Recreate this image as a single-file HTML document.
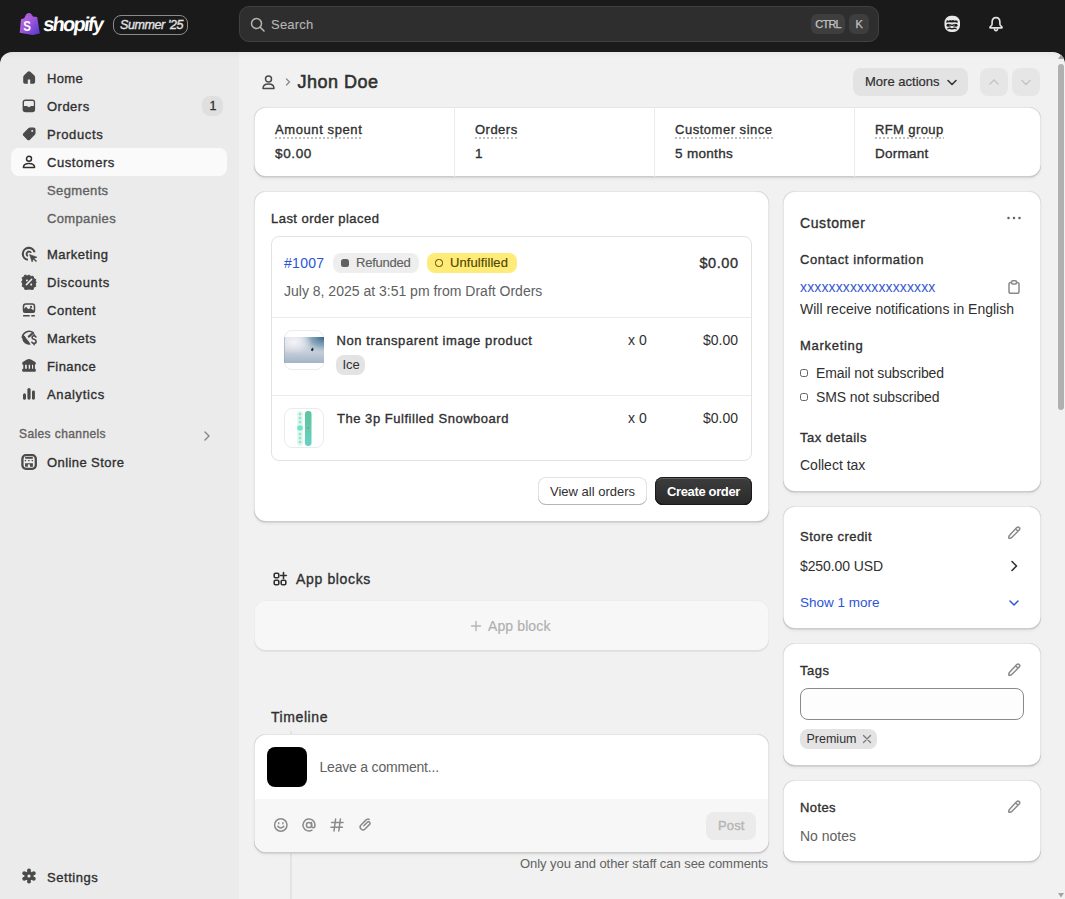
<!DOCTYPE html>
<html><head><meta charset="utf-8">
<style>
*{box-sizing:border-box;margin:0;padding:0}
html,body{width:1065px;height:899px;overflow:hidden;background:#1a1a1a;font-family:"Liberation Sans",sans-serif;color:#303030}
.abs{position:absolute}
.tx{position:absolute;white-space:nowrap;line-height:1}
</style></head><body>
<div class="abs" style="left:0px;top:0px;width:1065px;height:52px;background:#1a1a1a"></div>
<div class="abs" style="left:0px;top:52px;width:239px;height:847px;background:#ebebeb;border-top-left-radius:12px"></div>
<div class="abs" style="left:239px;top:52px;width:826px;height:847px;background:#f1f1f1;border-top-right-radius:12px"></div>
<div class="abs" style="left:0px;top:52px;width:1065px;height:6px;background:linear-gradient(rgba(0,0,0,.035),rgba(0,0,0,0));border-radius:12px 12px 0 0"></div>
<svg class="abs" style="left:19px;top:12px" width="22" height="24" viewBox="0 0 22 24"><defs><linearGradient id="bg" x1="0" y1="0" x2="1" y2="1"><stop offset="0" stop-color="#cc6ee0"/><stop offset=".5" stop-color="#9a55dc"/><stop offset="1" stop-color="#5038c8"/></linearGradient></defs><path d="M2 7.2 L5.3 6.2 Q6.8 1.2 9.8 0.9 Q12.6 1 13.8 4.4 L18.2 4.9 L20.8 21.6 L13.8 23 L0.7 20.8 Z" fill="url(#bg)"/><path d="M6.5 4.5 L7.5 3.2 M9.5 3.2 L10.5 2.2 M11.5 4 L12.3 3.2" stroke="#5a2a90" stroke-width=".8" opacity=".6"/><text transform="translate(4.2 19.3) scale(.74 1)" font-family="Liberation Sans" font-weight="700" font-size="15.5" fill="#fff">S</text></svg>
<div class="tx" style="left:42px;top:13.57px;font-size:20px;color:#fff;font-weight:700;letter-spacing:-1.732px;transform:skewX(-8deg);transform-origin:0 100%">shopify</div>
<div class="abs" style="left:113px;top:15px;width:75px;height:20px;border:1px solid #8a8a8a;border-radius:8px"></div>
<div class="tx" style="left:120px;top:19.02px;font-size:12.5px;color:#e3e3e3;font-weight:400;-webkit-text-stroke:0.35px #e3e3e3;letter-spacing:-0.400px;font-style:italic">Summer &#39;25</div>
<div class="abs" style="left:239px;top:6px;width:640px;height:36px;background:#2e2e2e;border:1px solid #414141;border-radius:10px"></div>
<svg class="abs" style="left:250px;top:17px" width="16" height="16" viewBox="0 0 16 16"><circle cx="6.5" cy="6.5" r="5" fill="none" stroke="#b5b5b5" stroke-width="1.5"/><path d="M10.2 10.2 L14 14" stroke="#b5b5b5" stroke-width="1.6" stroke-linecap="round"/></svg>
<div class="tx" style="left:271px;top:17.80px;font-size:13px;color:#b5b5b5;font-weight:400;-webkit-text-stroke:0.12px #b5b5b5;letter-spacing:0.216px;">Search</div>
<div class="abs" style="left:811px;top:14px;width:34px;height:20px;background:#3e3e3e;border-radius:6px"></div>
<div class="tx" style="left:815.2px;top:18.59px;font-size:11px;color:#c4c4c4;font-weight:400;-webkit-text-stroke:0.25px #c4c4c4;letter-spacing:-0.734px;">CTRL</div>
<div class="abs" style="left:849px;top:14px;width:20px;height:20px;background:#3e3e3e;border-radius:6px"></div>
<div class="tx" style="left:855.6px;top:18.59px;font-size:11px;color:#c4c4c4;font-weight:400;-webkit-text-stroke:0.25px #c4c4c4;letter-spacing:-0.344px;">K</div>
<svg class="abs" style="left:943px;top:15px" width="18" height="18" viewBox="0 0 18 18"><rect x="1.5" y="0.8" width="15.5" height="16.2" rx="6.5" fill="#e8e8e8"/><path d="M3.2 7.8 L3.6 5.6 L5 5.2 L5.6 6 L7 5 L8.6 5.6 L10.2 5 L11.8 5.8 L13.2 5.2 L14.6 6 L14.8 7.8 Q12 6.8 9 7.6 Q6 6.8 3.2 7.8Z" fill="#1a1a1a"/><circle cx="5" cy="10.2" r="1.5" fill="#1a1a1a"/><circle cx="13" cy="10.2" r="1.5" fill="#1a1a1a"/><path d="M6.2 9.3 L11.8 11.3 M6.2 11.3 L11.8 9.3" stroke="#1a1a1a" stroke-width="1"/><path d="M3.8 14.4 Q4.5 12.2 7 12.5 Q8 12.6 8.3 13 H9.7 Q10 12.6 11 12.5 Q13.5 12.2 14.2 14.4 Q12 13.8 9 14.4 Q6 13.8 3.8 14.4Z" fill="#1a1a1a"/></svg>
<svg class="abs" style="left:987px;top:15px" width="18" height="18" viewBox="0 0 18 18"><path d="M9 2.6 C6.2 2.6 5.1 4.8 5.1 7.3 V9 Q5.1 10.4 3.6 11.4 Q2.6 12.1 3.2 12.9 H14.8 Q15.4 12.1 14.4 11.4 Q12.9 10.4 12.9 9 V7.3 C12.9 4.8 11.8 2.6 9 2.6Z" fill="none" stroke="#e3e3e3" stroke-width="1.6" stroke-linejoin="round"/><path d="M7.4 13.4 Q7.5 15.7 9 15.7 Q10.5 15.7 10.6 13.4" fill="none" stroke="#e3e3e3" stroke-width="1.5"/></svg>
<div class="abs" style="left:11px;top:148px;width:216px;height:28px;background:#fafafa;border-radius:8px"></div>
<div class="tx" style="left:47px;top:72.00px;font-size:13px;color:#303030;font-weight:400;-webkit-text-stroke:0.35px #303030;letter-spacing:0.359px;">Home</div>
<div class="tx" style="left:47px;top:100.00px;font-size:13px;color:#303030;font-weight:400;-webkit-text-stroke:0.35px #303030;letter-spacing:0.484px;">Orders</div>
<div class="tx" style="left:47px;top:128.00px;font-size:13px;color:#303030;font-weight:400;-webkit-text-stroke:0.35px #303030;letter-spacing:0.629px;">Products</div>
<div class="tx" style="left:47px;top:156.00px;font-size:13px;color:#303030;font-weight:400;-webkit-text-stroke:0.35px #303030;letter-spacing:0.562px;">Customers</div>
<div class="tx" style="left:47px;top:248.00px;font-size:13px;color:#303030;font-weight:400;-webkit-text-stroke:0.35px #303030;letter-spacing:0.481px;">Marketing</div>
<div class="tx" style="left:47px;top:276.00px;font-size:13px;color:#303030;font-weight:400;-webkit-text-stroke:0.35px #303030;letter-spacing:0.641px;">Discounts</div>
<div class="tx" style="left:47px;top:304.00px;font-size:13px;color:#303030;font-weight:400;-webkit-text-stroke:0.35px #303030;letter-spacing:0.509px;">Content</div>
<div class="tx" style="left:47px;top:332.00px;font-size:13px;color:#303030;font-weight:400;-webkit-text-stroke:0.35px #303030;letter-spacing:0.415px;">Markets</div>
<div class="tx" style="left:47px;top:360.00px;font-size:13px;color:#303030;font-weight:400;-webkit-text-stroke:0.35px #303030;letter-spacing:0.411px;">Finance</div>
<div class="tx" style="left:47px;top:388.00px;font-size:13px;color:#303030;font-weight:400;-webkit-text-stroke:0.35px #303030;letter-spacing:0.642px;">Analytics</div>
<div class="tx" style="left:47px;top:456.00px;font-size:13px;color:#303030;font-weight:400;-webkit-text-stroke:0.35px #303030;letter-spacing:0.419px;">Online Store</div>
<div class="tx" style="left:47px;top:870.50px;font-size:13px;color:#303030;font-weight:400;-webkit-text-stroke:0.35px #303030;letter-spacing:0.539px;">Settings</div>
<div class="tx" style="left:47px;top:184.00px;font-size:13px;color:#616161;font-weight:400;-webkit-text-stroke:0.35px #616161;letter-spacing:0.369px;">Segments</div>
<div class="tx" style="left:47px;top:212.00px;font-size:13px;color:#616161;font-weight:400;-webkit-text-stroke:0.35px #616161;letter-spacing:0.359px;">Companies</div>
<div class="tx" style="left:19px;top:428.34px;font-size:12px;color:#616161;font-weight:400;-webkit-text-stroke:0.35px #616161;letter-spacing:0.401px;">Sales channels</div>
<svg class="abs" style="left:203px;top:430px" width="8" height="12" viewBox="0 0 8 12"><path d="M2 2 L6 6 L2 10" fill="none" stroke="#8a8a8a" stroke-width="1.5" stroke-linecap="round" stroke-linejoin="round"/></svg>
<div class="abs" style="left:202px;top:96px;width:21px;height:20px;background:#dfdfdf;border-radius:8px"></div>
<div class="tx" style="left:209.5px;top:99.72px;font-size:12.5px;color:#303030;font-weight:400;-webkit-text-stroke:0.3px #303030;letter-spacing:0.000px;">1</div>
<svg class="abs" style="left:21px;top:70px" width="16" height="16" viewBox="0 0 16 16"><path d="M8 1.2 Q7.2 1.2 6.4 2 L3.1 5.3 Q2.2 6.2 2.2 7.5 V12 Q2.2 13.7 3.9 13.7 H6.8 V9.6 H9.2 V13.7 H12.4 Q14.1 13.7 14.1 12 V7.5 Q14.1 6.2 13.2 5.3 L9.6 2 Q8.8 1.2 8 1.2Z" fill="#4a4a4a"/></svg>
<svg class="abs" style="left:21px;top:98px" width="16" height="16" viewBox="0 0 16 16"><path d="M4.6 1.6 H11.4 Q14.1 1.6 14.1 4.3 V11.6 Q14.1 14.3 11.4 14.3 H4.6 Q1.6 14.3 1.6 11.6 V4.3 Q1.6 1.6 4.6 1.6Z" fill="#4a4a4a"/><path d="M3 4.3 Q3 3 4.3 3 H11.5 Q12.8 3 12.8 4.3 V8 H10.2 L8 9.3 L5.8 8 H3Z" fill="#ebebeb"/></svg>
<svg class="abs" style="left:21px;top:126px" width="16" height="16" viewBox="0 0 16 16"><path d="M9 2.2 H12.6 Q13.9 2.2 13.9 3.5 V7.1 Q13.9 7.8 13.4 8.3 L8.5 13.2 Q7.6 14.1 6.7 13.2 L2.9 9.4 Q2 8.5 2.9 7.6 L7.8 2.7 Q8.3 2.2 9 2.2Z" fill="#4a4a4a" stroke="#4a4a4a" stroke-width="1.3" stroke-linejoin="round"/><rect x="10.3" y="4" width="1.8" height="1.8" rx=".5" fill="#ebebeb"/></svg>
<svg class="abs" style="left:21px;top:154px" width="16" height="16" viewBox="0 0 16 16"><circle cx="8" cy="4.8" r="2.5" fill="none" stroke="#303030" stroke-width="1.5"/><path d="M2.4 13.4 Q2.6 9.6 8 9.6 Q13.4 9.6 13.6 13.4 Z" fill="none" stroke="#303030" stroke-width="1.5" stroke-linejoin="round"/></svg>
<svg class="abs" style="left:21px;top:246px" width="16" height="16" viewBox="0 0 16 16"><path d="M13.6 6.3 A6 6 0 1 0 6.9 13.8" fill="none" stroke="#4a4a4a" stroke-width="2.1"/><path d="M10.1 6.8 A2.4 2.4 0 1 0 6.9 10.1" fill="none" stroke="#4a4a4a" stroke-width="1.9"/><path d="M8.6 8.6 L16 11.2 L13 12.4 L15.6 15 L14.9 15.7 L12.3 13.1 L11.1 16Z" fill="#4a4a4a" stroke="#4a4a4a" stroke-width=".6" stroke-linejoin="round"/></svg>
<svg class="abs" style="left:21px;top:274px" width="16" height="16" viewBox="0 0 16 16"><path d="M8 0.3 L10 1.9 L12.5 1.8 L13.2 4.2 L15.5 5.3 L14.7 7.8 L16 8 L14.7 10.2 L15.5 12.6 L13.2 13.7 L12.5 16.1 L10 16 L8 15.7 L6 16 L3.5 16.1 L2.8 13.7 L0.5 12.6 L1.3 10.2 L0 8 L1.3 5.7 L0.5 3.3 L2.8 2.2 L3.5 0.3 L6 1.5Z" fill="#4a4a4a" stroke="#4a4a4a" stroke-width="1" stroke-linejoin="round" transform="translate(8 8) scale(.92) translate(-8 -8)"/><path d="M5.4 10.6 L10.6 5.4" stroke="#ebebeb" stroke-width="1.5" stroke-linecap="round"/><rect x="5" y="5.4" width="1.8" height="1.8" rx=".5" fill="#ebebeb"/><rect x="9.3" y="9.6" width="1.8" height="1.8" rx=".5" fill="#ebebeb"/></svg>
<svg class="abs" style="left:21px;top:302px" width="16" height="16" viewBox="0 0 16 16"><rect x="2.5" y="2.1" width="11" height="8.2" rx="2.2" fill="#ebebeb" stroke="#4a4a4a" stroke-width="1.5"/><path d="M2.5 9 L2.5 7.5 L5 4.8 L7.3 7.3 L9.5 6 L13.5 9.2 L13.5 10.3 H2.5Z" fill="#4a4a4a"/><rect x="2.5" y="8.5" width="11" height="2" fill="#4a4a4a"/><circle cx="10.1" cy="4.9" r="1.1" fill="#4a4a4a"/><rect x="2" y="13" width="6.8" height="1.5" rx=".6" fill="#4a4a4a"/><rect x="10.2" y="13" width="3.7" height="1.5" rx=".6" fill="#4a4a4a"/></svg>
<svg class="abs" style="left:21px;top:330px" width="16" height="16" viewBox="0 0 16 16"><path d="M1.3 8 A6.8 6.8 0 0 1 12.4 2.9" fill="none" stroke="#4a4a4a" stroke-width="1.6"/><path d="M1.2 8 A6.8 6.8 0 0 0 9.6 14.6 L8.8 13 L7.2 10.8 L5.4 8.4 L3.7 6 L1.8 4.8 Z" fill="#4a4a4a"/><path d="M7.8 6.6 L11.9 3" stroke="#4a4a4a" stroke-width="2.2" stroke-linecap="round"/><path d="M14.9 6.9 Q14.4 5.7 13 5.7 Q11.1 5.7 11.1 7.4 Q11.1 8.9 13.1 9.3 Q15.1 9.7 15.1 11.6 Q15.1 13.4 13 13.4 Q11.4 13.4 10.9 12.2" fill="none" stroke="#4a4a4a" stroke-width="1.6" stroke-linecap="round"/><path d="M13.1 4.3 V5.7 M13.1 13.4 V14.8" stroke="#4a4a4a" stroke-width="1.5" stroke-linecap="round"/></svg>
<svg class="abs" style="left:21px;top:358px" width="16" height="16" viewBox="0 0 16 16"><path d="M8 0.9 Q9 0.9 10.5 1.8 L14.2 4 Q14.8 4.4 14.8 5.2 V5.8 Q14.8 6.7 13.9 6.7 H2.1 Q1.2 6.7 1.2 5.8 V5.2 Q1.2 4.4 1.8 4 L5.5 1.8 Q7 0.9 8 0.9Z" fill="#4a4a4a"/><rect x="2.3" y="6" width="1.8" height="5.5" fill="#4a4a4a"/><rect x="5.8" y="6" width="1.9" height="5.5" fill="#4a4a4a"/><rect x="9.1" y="6" width="1.9" height="5.5" fill="#4a4a4a"/><rect x="12.1" y="6" width="1.8" height="5.5" fill="#4a4a4a"/><path d="M2.1 10.7 H13.9 Q14.8 10.7 14.8 11.6 V12.8 Q14.8 13.7 13.9 13.7 H2.1 Q1.2 13.7 1.2 12.8 V11.6 Q1.2 10.7 2.1 10.7Z" fill="#4a4a4a"/></svg>
<svg class="abs" style="left:21px;top:386px" width="16" height="16" viewBox="0 0 16 16"><rect x="2" y="7.3" width="3" height="6.4" rx="1.5" fill="#4a4a4a"/><rect x="6.4" y="2" width="3.2" height="11.7" rx="1.6" fill="#4a4a4a"/><rect x="11" y="4.4" width="2.9" height="9.3" rx="1.45" fill="#4a4a4a"/></svg>
<svg class="abs" style="left:21px;top:454px" width="16" height="16" viewBox="0 0 16 16"><rect x="1.4" y="1.2" width="13.4" height="13.6" rx="3.5" fill="none" stroke="#4a4a4a" stroke-width="2.3"/><rect x="4.1" y="3.1" width="7.8" height="1.7" rx=".5" fill="#4a4a4a"/><path d="M3.4 6 H5.4 L4.4 7.8Z M6.9 6 H8.9 L7.9 7.8Z M10.3 6 H12.3 L11.3 7.8Z" fill="#4a4a4a"/><path d="M4.1 9.2 H11.9 V12.8 H9 V10.8 Q9 10.2 7.9 10.2 Q6.8 10.2 6.8 10.8 V12.8 H4.1Z" fill="#4a4a4a"/></svg>
<svg class="abs" style="left:21px;top:868px" width="16" height="16" viewBox="0 0 16 16"><circle cx="8" cy="8" r="4.7" fill="#4a4a4a"/><circle cx="8" cy="2.6" r="2" fill="#4a4a4a"/><circle cx="8" cy="13.4" r="2" fill="#4a4a4a"/><circle cx="3.3" cy="5.3" r="2" fill="#4a4a4a"/><circle cx="12.7" cy="5.3" r="2" fill="#4a4a4a"/><circle cx="3.3" cy="10.7" r="2" fill="#4a4a4a"/><circle cx="12.7" cy="10.7" r="2" fill="#4a4a4a"/><circle cx="8" cy="8" r="1.6" fill="#ebebeb"/></svg>
<svg class="abs" style="left:261px;top:74px" width="15" height="16" viewBox="0 0 15 16"><circle cx="7.5" cy="5" r="3" fill="none" stroke="#4a4a4a" stroke-width="1.5"/><path d="M2 14.5 Q2 10 7.5 10 Q13 10 13 14.5 Z" fill="none" stroke="#4a4a4a" stroke-width="1.5" stroke-linejoin="round"/></svg>
<svg class="abs" style="left:284px;top:77px" width="8" height="10" viewBox="0 0 8 10"><path d="M2.5 2 L5.5 5 L2.5 8" fill="none" stroke="#8a8a8a" stroke-width="1.3" stroke-linecap="round"/></svg>
<div class="tx" style="left:297.5px;top:72.76px;font-size:18px;color:#303030;font-weight:400;-webkit-text-stroke:0.55px #303030;letter-spacing:0.492px;">Jhon Doe</div>
<div class="abs" style="left:853px;top:68px;width:115px;height:28px;background:#e3e3e3;border-radius:8px"></div>
<div class="tx" style="left:865px;top:74.80px;font-size:13px;color:#303030;font-weight:400;-webkit-text-stroke:0.2px #303030;letter-spacing:0.007px;">More actions</div>
<svg class="abs" style="left:945px;top:77px" width="14" height="12" viewBox="0 0 14 12"><path d="M3 3.5 L7 7.5 L11 3.5" fill="none" stroke="#303030" stroke-width="1.5" stroke-linecap="round" stroke-linejoin="round"/></svg>
<div class="abs" style="left:980px;top:68px;width:28px;height:28px;background:#e6e6e6;border-radius:8px"></div>
<div class="abs" style="left:1012px;top:68px;width:28px;height:28px;background:#e6e6e6;border-radius:8px"></div>
<svg class="abs" style="left:986px;top:74px" width="16" height="16" viewBox="0 0 16 16"><path d="M4 10 L8 6 L12 10" fill="none" stroke="#c4c4c4" stroke-width="1.4" stroke-linecap="round"/></svg>
<svg class="abs" style="left:1018px;top:74px" width="16" height="16" viewBox="0 0 16 16"><path d="M4 6.5 L8 10.5 L12 6.5" fill="none" stroke="#c4c4c4" stroke-width="1.4" stroke-linecap="round"/></svg>
<div class="abs" style="left:254px;top:107px;width:787px;height:70px;background:#fff;border-radius:12px;box-shadow:inset 0 -1px 0 rgba(0,0,0,.2),inset 1px 0 0 rgba(0,0,0,.1),inset -1px 0 0 rgba(0,0,0,.1),inset 0 1px 0 rgba(204,204,204,.5),0 1px 0 rgba(26,26,26,.07),0 2px 3px rgba(26,26,26,.06);"></div>
<div class="abs" style="left:454px;top:107px;width:1px;height:70px;background:#ebebeb"></div>
<div class="abs" style="left:654px;top:107px;width:1px;height:70px;background:#ebebeb"></div>
<div class="abs" style="left:854px;top:107px;width:1px;height:70px;background:#ebebeb"></div>
<div class="tx" style="left:275px;top:123.00px;font-size:13px;color:#303030;font-weight:400;-webkit-text-stroke:0.35px #303030;letter-spacing:0.598px;">Amount spent</div>
<div class="abs" style="left:275px;top:137px;width:88px;height:2px;background-image:linear-gradient(90deg,#c0c0c0 50%,transparent 50%);background-size:4px 2px"></div>
<div class="tx" style="left:275px;top:147.37px;font-size:13.5px;color:#303030;font-weight:400;-webkit-text-stroke:0.35px #303030;letter-spacing:0.641px;">$0.00</div>
<div class="tx" style="left:475px;top:123.00px;font-size:13px;color:#303030;font-weight:400;-webkit-text-stroke:0.35px #303030;letter-spacing:0.484px;">Orders</div>
<div class="abs" style="left:475px;top:137px;width:43px;height:2px;background-image:linear-gradient(90deg,#c0c0c0 50%,transparent 50%);background-size:4px 2px"></div>
<div class="tx" style="left:475px;top:147.37px;font-size:13.5px;color:#303030;font-weight:400;-webkit-text-stroke:0.35px #303030;letter-spacing:0.000px;">1</div>
<div class="tx" style="left:675px;top:123.00px;font-size:13px;color:#303030;font-weight:400;-webkit-text-stroke:0.35px #303030;letter-spacing:0.517px;">Customer since</div>
<div class="abs" style="left:675px;top:137px;width:98px;height:2px;background-image:linear-gradient(90deg,#c0c0c0 50%,transparent 50%);background-size:4px 2px"></div>
<div class="tx" style="left:675px;top:147.37px;font-size:13.5px;color:#303030;font-weight:400;-webkit-text-stroke:0.35px #303030;letter-spacing:0.309px;">5 months</div>
<div class="tx" style="left:875px;top:123.00px;font-size:13px;color:#303030;font-weight:400;-webkit-text-stroke:0.35px #303030;letter-spacing:0.396px;">RFM group</div>
<div class="abs" style="left:875px;top:137px;width:69px;height:2px;background-image:linear-gradient(90deg,#c0c0c0 50%,transparent 50%);background-size:4px 2px"></div>
<div class="tx" style="left:875px;top:147.37px;font-size:13.5px;color:#303030;font-weight:400;-webkit-text-stroke:0.35px #303030;letter-spacing:0.248px;">Dormant</div>
<div class="abs" style="left:254px;top:191px;width:515px;height:331px;background:#fff;border-radius:12px;box-shadow:inset 0 -1px 0 rgba(0,0,0,.2),inset 1px 0 0 rgba(0,0,0,.1),inset -1px 0 0 rgba(0,0,0,.1),inset 0 1px 0 rgba(204,204,204,.5),0 1px 0 rgba(26,26,26,.07),0 2px 3px rgba(26,26,26,.06);"></div>
<div class="tx" style="left:271px;top:211.70px;font-size:13px;color:#303030;font-weight:400;-webkit-text-stroke:0.35px #303030;letter-spacing:0.466px;">Last order placed</div>
<div class="abs" style="left:271px;top:236px;width:481px;height:225px;border:1px solid #e3e3e3;border-radius:8px"></div>
<div class="abs" style="left:272px;top:317px;width:479px;height:1px;background:#ebebeb"></div>
<div class="abs" style="left:272px;top:395px;width:479px;height:1px;background:#ebebeb"></div>
<div class="tx" style="left:284px;top:256.15px;font-size:14px;color:#2a55d6;font-weight:400;letter-spacing:0.3px">#1007</div>
<div class="abs" style="left:333px;top:253px;width:86px;height:20px;background:#eeeeee;border-radius:8px"></div>
<div class="abs" style="left:341px;top:259px;width:8px;height:8px;background:#616161;border-radius:2.5px"></div>
<div class="tx" style="left:356px;top:256.00px;font-size:13px;color:#616161;font-weight:400;-webkit-text-stroke:0.15px #616161;letter-spacing:-0.236px;">Refunded</div>
<div class="abs" style="left:427px;top:253px;width:90px;height:20px;background:#ffeb78;border-radius:8px"></div>
<div class="abs" style="left:435px;top:259px;width:8px;height:8px;border:1.7px solid #4f4700;border-radius:3.5px"></div>
<div class="tx" style="left:450px;top:256.00px;font-size:13px;color:#4f4700;font-weight:400;-webkit-text-stroke:0.15px #4f4700;letter-spacing:0.082px;">Unfulfilled</div>
<div class="tx" style="right:326.5px;top:256.23px;font-size:14.5px;color:#303030;font-weight:400;-webkit-text-stroke:0.35px #303030;letter-spacing:0.541px;">$0.00</div>
<div class="tx" style="left:284px;top:284.15px;font-size:14px;color:#616161;font-weight:400;">July 8, 2025 at 3:51 pm from Draft Orders</div>
<div class="abs" style="left:284px;top:330px;width:40px;height:40px;border:1px solid #ebebeb;border-radius:8px;background:#fff"></div>
<svg class="abs" style="left:284px;top:337px" width="40" height="26" viewBox="0 0 40 26"><defs><linearGradient id="sky" x1="0" y1="0" x2="0" y2="1"><stop offset="0" stop-color="#dcdfe8"/><stop offset=".55" stop-color="#c9d0db"/><stop offset="1" stop-color="#a3b4c6"/></linearGradient><radialGradient id="tr" cx="1" cy="0" r=".7"><stop offset="0" stop-color="#2f6486"/><stop offset=".5" stop-color="#6c93ad" stop-opacity=".7"/><stop offset="1" stop-color="#c9d3de" stop-opacity="0"/></radialGradient><radialGradient id="wh" cx=".25" cy=".2" r=".45"><stop offset="0" stop-color="#f4f2f6"/><stop offset="1" stop-color="#f4f2f6" stop-opacity="0"/></radialGradient></defs><rect width="40" height="26" fill="url(#sky)"/><rect width="40" height="26" fill="url(#tr)"/><rect width="40" height="26" fill="url(#wh)"/><rect x="0" y="0" width="1" height="26" fill="#8fa6bd" opacity=".6"/><path d="M27.2 12 L29 10.6 L29.6 12.6 L28.6 14.2 L27 13.6Z" fill="#1f2a33"/></svg>
<div class="tx" style="left:336.5px;top:334.20px;font-size:13px;color:#303030;font-weight:400;-webkit-text-stroke:0.35px #303030;letter-spacing:0.579px;">Non transparent image product</div>
<div class="abs" style="left:336px;top:355px;width:29px;height:20px;background:#e3e3e3;border-radius:8px"></div>
<div class="tx" style="left:342.5px;top:358.00px;font-size:13px;color:#303030;font-weight:400;">Ice</div>
<div class="tx" style="left:628px;top:333.15px;font-size:14px;color:#303030;font-weight:400;">x 0</div>
<div class="tx" style="right:327px;top:333.15px;font-size:14px;color:#303030;font-weight:400;">$0.00</div>
<div class="abs" style="left:284px;top:408px;width:40px;height:40px;border:1px solid #ebebeb;border-radius:8px;background:#fff"></div>
<svg class="abs" style="left:294px;top:410px" width="20" height="36" viewBox="0 0 20 36"><defs><linearGradient id="sb" x1="0" y1="0" x2="0" y2="1"><stop offset="0" stop-color="#5ac49a"/><stop offset="1" stop-color="#66d2c4"/></linearGradient></defs><rect x="3" y="1" width="6" height="35" rx="3" fill="#e6f7f1"/><circle cx="6" cy="4" r="1.5" fill="#8ee8cc"/><circle cx="6" cy="8" r="1.5" fill="#8ee8cc"/><circle cx="6" cy="12" r="1.5" fill="#8ee8cc"/><circle cx="6" cy="18" r="2.8" fill="#6be8c8"/><circle cx="6" cy="24" r="1.5" fill="#8ee8cc"/><circle cx="6" cy="28" r="1.5" fill="#8ee8cc"/><circle cx="6" cy="32" r="1.5" fill="#8ee8cc"/><rect x="11" y="1" width="6.5" height="35" rx="3.2" fill="url(#sb)"/><circle cx="14.2" cy="18" r=".9" fill="#d9706a"/></svg>
<div class="tx" style="left:337px;top:412.30px;font-size:13px;color:#303030;font-weight:400;-webkit-text-stroke:0.35px #303030;letter-spacing:0.528px;">The 3p Fulfilled Snowboard</div>
<div class="tx" style="left:628px;top:411.45px;font-size:14px;color:#303030;font-weight:400;">x 0</div>
<div class="tx" style="right:327px;top:411.45px;font-size:14px;color:#303030;font-weight:400;">$0.00</div>
<div class="abs" style="left:538px;top:477px;width:109px;height:28px;background:#fff;border-radius:8px;box-shadow:inset 0 -1px 0 #b5b5b5,inset 0 0 0 1px #e3e3e3"></div>
<div class="tx" style="left:550px;top:484.50px;font-size:13px;color:#303030;font-weight:400;">View all orders</div>
<div class="abs" style="left:655px;top:477px;width:97px;height:28px;background:linear-gradient(#3d3d3d,#2a2a2a);border-radius:8px;box-shadow:inset 0 0 0 1px #1a1a1a,inset 0 2px 0 rgba(255,255,255,.18),inset 0 -1px 0 #000"></div>
<div class="tx" style="left:667px;top:484.50px;font-size:13px;color:#fff;font-weight:700;letter-spacing:-0.359px;">Create order</div>
<svg class="abs" style="left:272px;top:571px" width="16" height="16" viewBox="0 0 16 16"><rect x="2.2" y="2.2" width="4.6" height="4.6" rx="1.3" fill="none" stroke="#303030" stroke-width="1.6"/><rect x="2.2" y="9.2" width="4.6" height="4.6" rx="1.3" fill="none" stroke="#303030" stroke-width="1.6"/><rect x="9.2" y="9.2" width="4.6" height="4.6" rx="1.3" fill="none" stroke="#303030" stroke-width="1.6"/><path d="M11.5 1.6 V7.4 M8.6 4.5 H14.4" stroke="#303030" stroke-width="1.6" stroke-linecap="round"/></svg>
<div class="tx" style="left:296px;top:571.95px;font-size:14px;color:#303030;font-weight:400;-webkit-text-stroke:0.35px #303030;letter-spacing:0.652px;">App blocks</div>
<div class="abs" style="left:254px;top:600px;width:515px;height:51px;background:#f7f7f7;border-radius:12px;box-shadow:0 1px 0 rgba(26,26,26,.07),inset 0 -1px 0 rgba(0,0,0,.06),inset 0 0 0 1px rgba(0,0,0,.04)"></div>
<svg class="abs" style="left:470px;top:620px" width="12" height="12" viewBox="0 0 12 12"><path d="M6 1.5 V10.5 M1.5 6 H10.5" stroke="#b5b5b5" stroke-width="1.4" stroke-linecap="round"/></svg>
<div class="tx" style="left:488px;top:619.25px;font-size:14px;color:#b0b0b0;font-weight:400;-webkit-text-stroke:0.2px #b0b0b0;letter-spacing:0.113px;">App block</div>
<div class="tx" style="left:271px;top:709.85px;font-size:14px;color:#303030;font-weight:400;-webkit-text-stroke:0.35px #303030;letter-spacing:0.576px;">Timeline</div>
<div class="abs" style="left:290px;top:731px;width:2px;height:168px;background:#e3e3e3"></div>
<div class="abs" style="left:254px;top:734px;width:515px;height:119px;background:#fff;border-radius:12px;box-shadow:inset 0 -1px 0 rgba(0,0,0,.2),inset 1px 0 0 rgba(0,0,0,.1),inset -1px 0 0 rgba(0,0,0,.1),inset 0 1px 0 rgba(204,204,204,.5),0 1px 0 rgba(26,26,26,.07),0 2px 3px rgba(26,26,26,.06);overflow:hidden"></div>
<div class="abs" style="left:255px;top:799px;width:513px;height:53px;background:#f7f7f7;border-radius:0 0 11px 11px"></div>
<div class="abs" style="left:267px;top:747px;width:40px;height:40px;background:#000;border-radius:8px"></div>
<div class="tx" style="left:319.5px;top:760.45px;font-size:14px;color:#616161;font-weight:400;letter-spacing:-0.2px">Leave a comment...</div>
<svg class="abs" style="left:273px;top:817px" width="16" height="16" viewBox="0 0 16 16"><circle cx="7.8" cy="8" r="6.2" fill="none" stroke="#8a8a8a" stroke-width="1.5"/><rect x="5" y="5" width="1.4" height="2.4" rx=".7" fill="#8a8a8a"/><rect x="9.2" y="5" width="1.4" height="2.4" rx=".7" fill="#8a8a8a"/><path d="M4.8 9.2 Q7.8 12.6 10.8 9.2" fill="none" stroke="#8a8a8a" stroke-width="1.5" stroke-linecap="round"/></svg>
<svg class="abs" style="left:301px;top:817px" width="16" height="16" viewBox="0 0 16 16"><circle cx="8" cy="8" r="2.6" fill="none" stroke="#8a8a8a" stroke-width="1.5"/><path d="M10.6 5.6 V9 Q10.6 10.8 12.2 10.8 Q14 10.8 14 8 A6 6 0 1 0 11 13.2" fill="none" stroke="#8a8a8a" stroke-width="1.5" stroke-linecap="round"/></svg>
<svg class="abs" style="left:329px;top:817px" width="16" height="16" viewBox="0 0 16 16"><path d="M6.6 2 L5 14 M11.4 2 L9.8 14 M2.6 5.6 H14 M2 10.2 H13.4" stroke="#8a8a8a" stroke-width="1.5" stroke-linecap="round"/></svg>
<svg class="abs" style="left:357px;top:817px" width="16" height="16" viewBox="0 0 16 16"><path d="M6.8 8.8 L10.4 5.2 Q11.5 4.1 12.6 5.2 Q13.7 6.3 12.6 7.4 L8 12 Q6 14 4 12 Q2 10 4 8 L8.6 3.4 Q10.6 1.4 12.2 2.4" fill="none" stroke="#8a8a8a" stroke-width="1.5" stroke-linecap="round"/></svg>
<div class="abs" style="left:706px;top:812px;width:50px;height:28px;background:#ebebeb;border-radius:8px"></div>
<div class="tx" style="left:718px;top:818.50px;font-size:13px;color:#b5b5b5;font-weight:400;-webkit-text-stroke:0.35px #b5b5b5;letter-spacing:0.121px;">Post</div>
<div class="tx" style="right:297px;top:857.40px;font-size:13px;color:#616161;font-weight:400;letter-spacing:-0.061px;">Only you and other staff can see comments</div>
<div class="abs" style="left:783px;top:191px;width:258px;height:301px;background:#fff;border-radius:12px;box-shadow:inset 0 -1px 0 rgba(0,0,0,.2),inset 1px 0 0 rgba(0,0,0,.1),inset -1px 0 0 rgba(0,0,0,.1),inset 0 1px 0 rgba(204,204,204,.5),0 1px 0 rgba(26,26,26,.07),0 2px 3px rgba(26,26,26,.06);"></div>
<div class="tx" style="left:800px;top:216.15px;font-size:14px;color:#303030;font-weight:400;-webkit-text-stroke:0.35px #303030;letter-spacing:0.602px;">Customer</div>
<svg class="abs" style="left:1006px;top:214px" width="16" height="8" viewBox="0 0 16 8"><circle cx="2.5" cy="4" r="1.25" fill="#616161"/><circle cx="8" cy="4" r="1.25" fill="#616161"/><circle cx="13.5" cy="4" r="1.25" fill="#616161"/></svg>
<div class="tx" style="left:800px;top:253.00px;font-size:13px;color:#303030;font-weight:400;-webkit-text-stroke:0.35px #303030;letter-spacing:0.593px;">Contact information</div>
<div class="tx" style="left:800px;top:279.55px;font-size:14px;color:#3558d2;font-weight:400;letter-spacing:0.13px">xxxxxxxxxxxxxxxxxxx</div>
<svg class="abs" style="left:1006px;top:279px" width="16" height="16" viewBox="0 0 16 16"><path d="M5.5 3.5 H4.8 Q3 3.5 3 5.3 V12.5 Q3 14.3 4.8 14.3 H11.2 Q13 14.3 13 12.5 V5.3 Q13 3.5 11.2 3.5 H10.5" fill="none" stroke="#8a8a8a" stroke-width="1.5"/><rect x="5.5" y="1.8" width="5" height="3.2" rx="1.2" fill="none" stroke="#8a8a8a" stroke-width="1.5"/></svg>
<div class="tx" style="left:800px;top:301.85px;font-size:14px;color:#303030;font-weight:400;">Will receive notifications in English</div>
<div class="tx" style="left:800px;top:339.30px;font-size:13px;color:#303030;font-weight:400;-webkit-text-stroke:0.35px #303030;letter-spacing:0.714px;">Marketing</div>
<div class="abs" style="left:800px;top:369px;width:8px;height:8px;border:1.3px solid #616161;border-radius:2.5px"></div>
<div class="tx" style="left:816px;top:366.35px;font-size:14px;color:#303030;font-weight:400;letter-spacing:-0.1px">Email not subscribed</div>
<div class="abs" style="left:800px;top:393px;width:8px;height:8px;border:1.3px solid #616161;border-radius:2.5px"></div>
<div class="tx" style="left:816px;top:390.45px;font-size:14px;color:#303030;font-weight:400;letter-spacing:-0.1px">SMS not subscribed</div>
<div class="tx" style="left:800px;top:431.00px;font-size:13px;color:#303030;font-weight:400;-webkit-text-stroke:0.35px #303030;letter-spacing:0.507px;">Tax details</div>
<div class="tx" style="left:800px;top:458.15px;font-size:14px;color:#303030;font-weight:400;">Collect tax</div>
<div class="abs" style="left:783px;top:506px;width:258px;height:123px;background:#fff;border-radius:12px;box-shadow:inset 0 -1px 0 rgba(0,0,0,.2),inset 1px 0 0 rgba(0,0,0,.1),inset -1px 0 0 rgba(0,0,0,.1),inset 0 1px 0 rgba(204,204,204,.5),0 1px 0 rgba(26,26,26,.07),0 2px 3px rgba(26,26,26,.06);"></div>
<div class="tx" style="left:800px;top:530.10px;font-size:13px;color:#303030;font-weight:400;-webkit-text-stroke:0.35px #303030;letter-spacing:0.460px;">Store credit</div>
<svg class="abs" style="left:1006px;top:525px" width="16" height="16" viewBox="0 0 16 16"><path d="M10.8 2.6 Q12 1.4 13.2 2.6 Q14.4 3.8 13.2 5 L6 12.2 Q5 13.2 3.6 13.3 Q2.6 13.4 2.7 12.4 Q2.8 11 3.8 10 Z M9.6 3.8 L12 6.2" fill="none" stroke="#8a8a8a" stroke-width="1.5" stroke-linejoin="round"/></svg>
<div class="tx" style="left:800px;top:559.15px;font-size:14px;color:#303030;font-weight:400;letter-spacing:-0.1px">$250.00 USD</div>
<svg class="abs" style="left:1006px;top:558px" width="16" height="16" viewBox="0 0 16 16"><path d="M6 3.5 L10.5 8 L6 12.5" fill="none" stroke="#303030" stroke-width="1.6" stroke-linecap="round" stroke-linejoin="round"/></svg>
<div class="tx" style="left:800px;top:595.57px;font-size:13.5px;color:#2a55d6;font-weight:400;">Show 1 more</div>
<svg class="abs" style="left:1006px;top:595px" width="16" height="16" viewBox="0 0 16 16"><path d="M4 6 L8 10 L12 6" fill="none" stroke="#2a55d6" stroke-width="1.5" stroke-linecap="round" stroke-linejoin="round"/></svg>
<div class="abs" style="left:783px;top:643px;width:258px;height:123px;background:#fff;border-radius:12px;box-shadow:inset 0 -1px 0 rgba(0,0,0,.2),inset 1px 0 0 rgba(0,0,0,.1),inset -1px 0 0 rgba(0,0,0,.1),inset 0 1px 0 rgba(204,204,204,.5),0 1px 0 rgba(26,26,26,.07),0 2px 3px rgba(26,26,26,.06);"></div>
<div class="tx" style="left:800px;top:663.60px;font-size:13px;color:#303030;font-weight:400;-webkit-text-stroke:0.35px #303030;letter-spacing:0.480px;">Tags</div>
<svg class="abs" style="left:1006px;top:662px" width="16" height="16" viewBox="0 0 16 16"><path d="M10.8 2.6 Q12 1.4 13.2 2.6 Q14.4 3.8 13.2 5 L6 12.2 Q5 13.2 3.6 13.3 Q2.6 13.4 2.7 12.4 Q2.8 11 3.8 10 Z M9.6 3.8 L12 6.2" fill="none" stroke="#8a8a8a" stroke-width="1.5" stroke-linejoin="round"/></svg>
<div class="abs" style="left:800px;top:688px;width:224px;height:32px;border:1px solid #8a8a8a;border-radius:8px;background:#fdfdfd"></div>
<div class="abs" style="left:800px;top:729px;width:77px;height:20px;background:#e3e3e3;border-radius:8px"></div>
<div class="tx" style="left:806.5px;top:732.52px;font-size:12.5px;color:#303030;font-weight:400;">Premium</div>
<svg class="abs" style="left:861px;top:733px" width="12" height="12" viewBox="0 0 12 12"><path d="M2.5 2.5 L9.5 9.5 M9.5 2.5 L2.5 9.5" stroke="#7a7a7a" stroke-width="1.3" stroke-linecap="round"/></svg>
<div class="abs" style="left:783px;top:780px;width:258px;height:82px;background:#fff;border-radius:12px;box-shadow:inset 0 -1px 0 rgba(0,0,0,.2),inset 1px 0 0 rgba(0,0,0,.1),inset -1px 0 0 rgba(0,0,0,.1),inset 0 1px 0 rgba(204,204,204,.5),0 1px 0 rgba(26,26,26,.07),0 2px 3px rgba(26,26,26,.06);"></div>
<div class="tx" style="left:800px;top:801.30px;font-size:13px;color:#303030;font-weight:400;-webkit-text-stroke:0.35px #303030;letter-spacing:0.406px;">Notes</div>
<svg class="abs" style="left:1006px;top:799px" width="16" height="16" viewBox="0 0 16 16"><path d="M10.8 2.6 Q12 1.4 13.2 2.6 Q14.4 3.8 13.2 5 L6 12.2 Q5 13.2 3.6 13.3 Q2.6 13.4 2.7 12.4 Q2.8 11 3.8 10 Z M9.6 3.8 L12 6.2" fill="none" stroke="#8a8a8a" stroke-width="1.5" stroke-linejoin="round"/></svg>
<div class="tx" style="left:800px;top:828.55px;font-size:14px;color:#616161;font-weight:400;">No notes</div>
<div class="abs" style="left:1058px;top:64px;width:6px;height:346px;background:#b0b0b0;border-radius:3px"></div>
<svg class="abs" style="left:1057px;top:53px" width="8" height="7" viewBox="0 0 8 7"><path d="M1 6 L4 1.5 L7 6Z" fill="#a3a3a3"/></svg>
<svg class="abs" style="left:1057px;top:892px" width="8" height="7" viewBox="0 0 8 7"><path d="M1 1 L4 5.5 L7 1Z" fill="#a3a3a3"/></svg>
</body></html>
